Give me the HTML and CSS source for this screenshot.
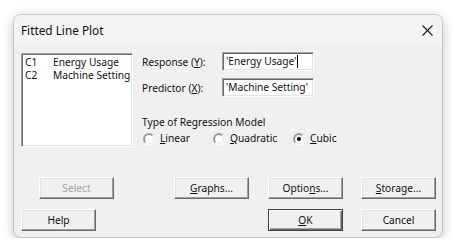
FILE: index.html
```html
<!DOCTYPE html>
<html>
<head>
<meta charset="utf-8">
<link rel="stylesheet" href="styles.css">
</head>
<body>
<div class="dialog">
  <div class="titlebar">
    <span class="title">Fitted Line Plot</span>
    <svg class="close" width="11" height="11" viewBox="0 0 11 11"><path d="M0.5 0.5 L10.5 10.5 M10.5 0.5 L0.5 10.5" stroke="#1c1c1c" stroke-width="1.1" fill="none"/></svg>
  </div>
  <div class="body">
    <div class="top">
      <div class="listbox">
        <div class="item"><span>C1</span><span>Energy Usage</span></div>
        <div class="item"><span>C2</span><span>Machine Setting</span></div>
      </div>
      <div class="right">
        <div class="field">
          <span class="label">Response (<u>Y</u>):</span>
          <div class="textbox">'Energy Usage'<span class="caret"></span></div>
        </div>
        <div class="field">
          <span class="label">Predictor (<u>X</u>):</span>
          <div class="textbox">'Machine Setting'</div>
        </div>
        <div class="group">
          <div class="group-title">Type of Regression Model</div>
          <div class="radios">
            <div class="radio"><span class="circle"></span><span><u>L</u>inear</span></div>
            <div class="radio"><span class="circle"></span><span><u>Q</u>uadratic</span></div>
            <div class="radio"><span class="circle checked"></span><span><u>C</u>ubic</span></div>
          </div>
        </div>
      </div>
    </div>
    <div class="btnrow row1">
      <div class="btn disabled b-select">Select</div>
      <div class="btn b-graphs"><u>G</u>raphs...</div>
      <div class="btn b-options">Optio<u>n</u>s...</div>
      <div class="btn b-storage"><u>S</u>torage...</div>
    </div>
    <div class="btnrow row2">
      <div class="btn b-help">Help</div>
      <div class="btn default b-ok"><u>O</u>K</div>
      <div class="btn b-cancel">Cancel</div>
    </div>
  </div>
</div>
</body>
</html>
```
FILE: styles.css
```css
html, body {
  margin: 0;
  padding: 0;
  background: #ffffff;
}
body {
  font-family: "Noto Sans", "Open Sans", sans-serif;
  font-size: 10.2px;
  color: #111;
  padding: 14px 0 0 13px;
}
.dialog {
  width: 430px;
  height: 224px;
  box-sizing: border-box;
  border: 1px solid #c6c6c6;
  border-radius: 8px;
  background: #f0f0f0;
  box-shadow: 0 3px 12px rgba(0, 0, 0, 0.22);
  overflow: hidden;
}
.titlebar {
  height: 30px;
  background: #f3f3f3;
  display: flex;
  align-items: center;
  justify-content: space-between;
  padding: 0 9px 0 7px;
}
.title {
  font-size: 11.8px;
  line-height: 14px;
}
.close {
  display: block;
}
.body {
  padding: 8px 6px 0 7px;
}
.top {
  display: flex;
  gap: 9px;
  height: 94px;
}
.listbox {
  width: 112px;
  height: 94px;
  box-sizing: border-box;
  background: #fff;
  border: 1px solid;
  border-color: #a0a0a0 #fff #fff #a0a0a0;
  box-shadow: inset 1px 1px 0 #696969, inset -1px -1px 0 #e3e3e3;
  padding: 2px 2px 0 3px;
}
.item {
  display: grid;
  grid-template-columns: 28px auto;
  line-height: 13px;
  white-space: nowrap;
}
.right {
  display: flex;
  flex-direction: column;
  margin-top: -1px;
}
.field {
  display: grid;
  grid-template-columns: 80px 92px;
  align-items: center;
  height: 19px;
  margin-bottom: 7px;
}
.textbox {
  height: 19px;
  box-sizing: border-box;
  background: #fff;
  border: 1px solid;
  border-color: #a0a0a0 #fff #fff #a0a0a0;
  box-shadow: inset 1px 1px 0 #696969, inset -1px -1px 0 #e3e3e3;
  padding: 0 2px 0 3px;
  line-height: 17px;
  white-space: nowrap;
  display: flex;
  align-items: center;
}
.caret {
  display: inline-block;
  width: 1px;
  height: 13px;
  background: #000;
  margin-left: 1px;
}
.group {
  margin-top: 12px;
}
.group-title {
  line-height: 13px;
}
.radios {
  display: grid;
  grid-template-columns: 70px 80px auto;
  margin-top: 3px;
}
.radio {
  display: flex;
  align-items: center;
  gap: 5px;
  line-height: 13px;
  padding-left: 1px;
}
.circle {
  position: relative;
  width: 12px;
  height: 12px;
  box-sizing: border-box;
  border-radius: 50%;
  border: 1px solid;
  border-color: #a0a0a0 #ffffff #ffffff #a0a0a0;
  background: #fff;
}
.circle::before {
  content: "";
  position: absolute;
  inset: 0;
  border-radius: 50%;
  border: 1px solid;
  border-color: #808080 #e3e3e3 #e3e3e3 #808080;
  box-sizing: border-box;
}
.circle.checked::after {
  content: "";
  position: absolute;
  left: 3px;
  top: 3px;
  width: 4px;
  height: 4px;
  border-radius: 50%;
  background: #000;
}
.btnrow {
  display: flex;
}
.row1 {
  margin-top: 30px;
}
.row2 {
  margin-top: 10px;
}
.btn {
  width: 75px;
  height: 22px;
  box-sizing: border-box;
  background: #f0f0f0;
  border: 1px solid;
  border-color: #fff #696969 #696969 #fff;
  box-shadow: inset -1px -1px 0 #a0a0a0, inset 1px 1px 0 #e3e3e3;
  display: flex;
  align-items: center;
  justify-content: center;
  line-height: 13px;
  white-space: nowrap;
}
.btn.disabled {
  color: #a0a0a0;
}
.btn.default {
  border-color: #404040;
  box-shadow: inset 1px 1px 0 #fff, inset -1px -1px 0 #696969, inset -2px -2px 0 #a0a0a0;
}
.b-select { margin-left: 18px; }
.b-graphs { margin-left: 60px; }
.b-options { margin-left: 19px; }
.b-storage { margin-left: 18px; }
.b-ok { margin-left: 172px; }
.b-cancel { margin-left: 18px; }
u {
  text-decoration: underline;
  text-underline-offset: 1px;
}
```
